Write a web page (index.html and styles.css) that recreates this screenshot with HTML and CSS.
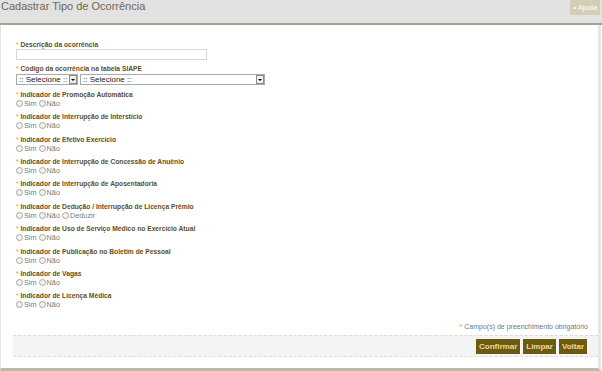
FILE: index.html
```html
<!DOCTYPE html>
<html lang="pt-BR">

<head>
    <meta charset="UTF-8">
    <title>Cadastrar Tipo de Ocorrência</title>
    <link rel="stylesheet" href="styles.css">
</head>

<body>
    <div class="page-header">
        <h1 class="page-title">Cadastrar Tipo de Ocorrência</h1>
        <a href="#" class="help-btn">&bull; Ajuda</a>
    </div>

    <div class="panel">
        <form class="form">
            <div class="field">
                <label class="field-label"><span class="req">*</span> Descrição da ocorrência</label>
                <input type="text" class="text-input">
            </div>

            <div class="field">
                <label class="field-label"><span class="req">*</span> Código da ocorrência na tabela SIAPE</label>
                <div class="select-row">
                    <div class="select-wrap small">
                        <select><option>:: Selecione ::</option></select>
                    </div>
                    <div class="select-wrap large">
                        <select><option>:: Selecione ::</option></select>
                    </div>
                </div>
            </div>

            <div class="field">
                <label class="field-label"><span class="req">*</span> Indicador de Promoção Automática</label>
                <div class="radios">
                    <label><input type="radio" name="r1">Sim</label>
                    <label><input type="radio" name="r1">Não</label>
                </div>
            </div>

            <div class="field">
                <label class="field-label"><span class="req">*</span> Indicador de Interrupção de Interstício</label>
                <div class="radios">
                    <label><input type="radio" name="r2">Sim</label>
                    <label><input type="radio" name="r2">Não</label>
                </div>
            </div>

            <div class="field">
                <label class="field-label"><span class="req">*</span> Indicador de Efetivo Exercício</label>
                <div class="radios">
                    <label><input type="radio" name="r3">Sim</label>
                    <label><input type="radio" name="r3">Não</label>
                </div>
            </div>

            <div class="field">
                <label class="field-label"><span class="req">*</span> Indicador de Interrupção de Concessão de Anuênio</label>
                <div class="radios">
                    <label><input type="radio" name="r4">Sim</label>
                    <label><input type="radio" name="r4">Não</label>
                </div>
            </div>

            <div class="field">
                <label class="field-label"><span class="req">*</span> Indicador de Interrupção de Aposentadoria</label>
                <div class="radios">
                    <label><input type="radio" name="r5">Sim</label>
                    <label><input type="radio" name="r5">Não</label>
                </div>
            </div>

            <div class="field">
                <label class="field-label"><span class="req">*</span> Indicador de Dedução / Interrupção de Licença Prêmio</label>
                <div class="radios">
                    <label><input type="radio" name="r6">Sim</label>
                    <label><input type="radio" name="r6">Não</label>
                    <label><input type="radio" name="r6">Deduzir</label>
                </div>
            </div>

            <div class="field">
                <label class="field-label"><span class="req">*</span> Indicador de Uso de Serviço Médico no Exercício Atual</label>
                <div class="radios">
                    <label><input type="radio" name="r7">Sim</label>
                    <label><input type="radio" name="r7">Não</label>
                </div>
            </div>

            <div class="field">
                <label class="field-label"><span class="req">*</span> Indicador de Publicação no Boletim de Pessoal</label>
                <div class="radios">
                    <label><input type="radio" name="r8">Sim</label>
                    <label><input type="radio" name="r8">Não</label>
                </div>
            </div>

            <div class="field">
                <label class="field-label"><span class="req">*</span> Indicador de Vagas</label>
                <div class="radios">
                    <label><input type="radio" name="r9">Sim</label>
                    <label><input type="radio" name="r9">Não</label>
                </div>
            </div>

            <div class="field">
                <label class="field-label"><span class="req">*</span> Indicador de Licença Médica</label>
                <div class="radios">
                    <label><input type="radio" name="r10">Sim</label>
                    <label><input type="radio" name="r10">Não</label>
                </div>
            </div>

            <p class="required-note"><span class="req">*</span> Campo(s) de preenchimento obrigatório</p>

            <div class="button-bar">
                <button type="button">Confirmar</button>
                <button type="button">Limpar</button>
                <button type="button">Voltar</button>
            </div>
        </form>
    </div>
</body>

</html>
```

FILE: styles.css
```css
body {
    font-family: "Liberation Sans", Arial, sans-serif;
    margin: 0;
    padding: 0;
    background-color: #fff;
    width: 602px;
    height: 371px;
    overflow: hidden;
}

/* Header */
.page-header {
    display: flex;
    justify-content: space-between;
    align-items: flex-start;
    height: 23px;
    background-color: #e2e2e2;
    border-bottom: 2px solid #a3a293;
}

.page-title {
    margin: 0;
    padding: 0 0 0 1px;
    font-size: 11px;
    font-weight: normal;
    line-height: 13px;
    color: #6e6756;
}

.help-btn {
    margin-right: 2px;
    padding: 3px 3px 3px 4px;
    font-size: 7.5px;
    line-height: 9px;
    color: #fff;
    background-color: #d2ceb6;
    text-decoration: none;
}

/* Panel */
.panel {
    height: 343px;
    border-left: 1px solid #e3e3e3;
    border-right: 3px solid #e6e6e6;
    border-bottom: 3px solid #bdb9a2;
    margin-right: 1px;
}

.form {
    padding: 15px 0 0 15px;
}

.field {
    margin-bottom: 4.4px;
}

.field-label {
    display: block;
    font-size: 6.7px;
    font-weight: bold;
    line-height: 9px;
    color: #5d4f25;
}

.req {
    color: #e8912a;
    font-weight: normal;
}

.text-input {
    display: block;
    box-sizing: border-box;
    width: 191px;
    height: 11px;
    margin: 0;
    padding: 0;
    border: 1px solid #d6d6d6;
    background: #fff;
}

.select-row {
    display: flex;
    gap: 2px;
    margin-top: 1px;
}

.select-wrap {
    position: relative;
    height: 11px;
}

.select-wrap.small { width: 62px; }
.select-wrap.large { width: 185px; }

.select-wrap select {
    display: block;
    appearance: none;
    box-sizing: border-box;
    width: 100%;
    height: 11px;
    margin: 0;
    padding: 0 0 0 2px;
    border: 1px solid #a9a9a9;
    border-radius: 0;
    background: #fff;
    font-family: "Liberation Sans", Arial, sans-serif;
    font-size: 8px;
    line-height: 9px;
    color: #222;
}

.select-wrap::after {
    content: "";
    position: absolute;
    top: 1px;
    right: 1px;
    width: 8px;
    height: 9px;
    box-sizing: border-box;
    border: 1px solid #8c8c8c;
    background: #efefef;
}

.select-wrap::before {
    content: "";
    position: absolute;
    top: 5px;
    right: 3px;
    border-left: 2px solid transparent;
    border-right: 2px solid transparent;
    border-top: 2px solid #000;
    z-index: 1;
}

.radios {
    display: flex;
    gap: 2px;
    height: 9px;
    align-items: center;
}

.radios label {
    display: flex;
    align-items: center;
    font-size: 7.3px;
    color: #7a7a7a;
}

.radios input {
    appearance: none;
    width: 7px;
    height: 7px;
    margin: 0 1px 0 0;
    border: 1px solid #a5a5a5;
    border-radius: 50%;
    background: #f2f2f2;
}

.required-note {
    margin: 14px 10px 5px 0;
    text-align: right;
    font-size: 7px;
    color: #777;
}

/* Buttons */
.button-bar {
    display: flex;
    justify-content: flex-end;
    gap: 3px;
    margin-left: -3px;
    padding: 3px 11px 2px 0;
    background-color: #f4f4f4;
    border-top: 1px dashed #dcdcdc;
    border-bottom: 1px dashed #dcdcdc;
}

button {
    padding: 2px 3px;
    border: none;
    background-color: #6d5a12;
    color: #f1d990;
    font-family: "Liberation Sans", Arial, sans-serif;
    font-size: 8px;
    font-weight: bold;
    line-height: 11px;
    cursor: pointer;
}
```
